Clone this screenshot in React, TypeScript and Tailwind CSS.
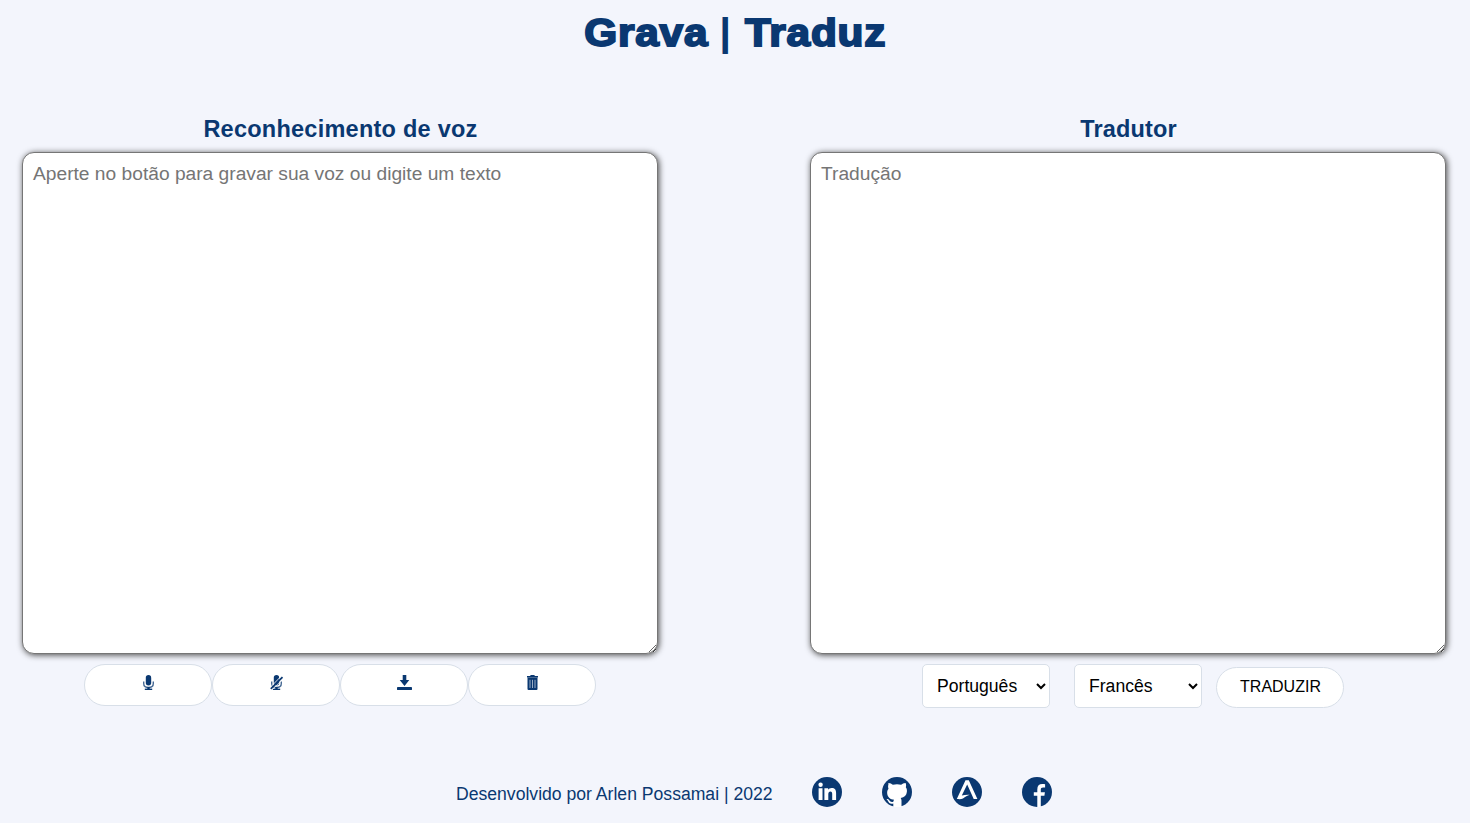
import type { ReactNode } from "react";

const NAVY = "#0a3871";

function Mic({ muted = false }: { muted?: boolean }) {
  return (
    <svg width="16" height="16" viewBox="-0.5 0 16 16" fill="none">
      <rect x="5.3" y="0" width="5.4" height="10.4" rx="2.7" fill={NAVY} />
      <path d="M3.2 6.6v1.8c0 2.6 2 4 4.8 4s4.8-1.4 4.800-4V6.600" stroke={NAVY} strokeOpacity="0.75" strokeWidth="1.4" />
      <path d="M8 12v3" stroke={NAVY} strokeWidth="2.4" />
      <path d="M4.300 14.300h7.400" stroke={NAVY} strokeWidth="1.400" />
      {muted && (
        <>
          <path d="M2 12.200 12.800 1" stroke="#fff" strokeWidth="0.900" />
          <path d="M2.300 13.900 14 2.200" stroke={NAVY} strokeWidth="1.700" />
          <path d="M3.500 14.900 14.600 3.800" stroke="#fff" strokeWidth="0.700" />
        </>
      )}
    </svg>
  );
}

function Download() {
  return (
    <svg width="16" height="16" viewBox="-0.5 0 16 16" fill={NAVY}>
      <path d="M6.200 0h3.600v5h3L8 11 3.200 5h3z" />
      <rect x="0.500" y="12" width="15" height="3" rx="0.400" />
    </svg>
  );
}

function Trash() {
  return (
    <svg width="16" height="16" viewBox="-0.5 0 16 16" fill={NAVY}>
      <path d="M2.500 1.100h3L6.300 0h3.400l.8 1.100h3v1.500h-11z" />
      <path d="M3 2.500h10v11.500a1 1 0 0 1-1 1H4a1 1 0 0 1-1-1z" />
      <path d="M5.500 4.800v8.200M8 4.800v8.200M10.500 4.800v8.200" stroke="#fff" strokeOpacity="0.65" strokeWidth="0.900" />
    </svg>
  );
}

function Social({ label, children }: { label: string; children: ReactNode }) {
  return (
    <a href="#" aria-label={label}>
      <svg width="30" height="30" viewBox="0 0 30 30">
        <circle cx="15" cy="15" r="15" fill={NAVY} />
        {children}
      </svg>
    </a>
  );
}

function Pill({ label, children }: { label: string; children: ReactNode }) {
  return (
    <button
      aria-label={label}
      className="flex h-[42px] w-32 items-start justify-center rounded-[24px] border border-[#d8dfe8] bg-white pt-[10px]"
    >
      {children}
    </button>
  );
}

const areaClass =
  "block h-[502px] w-[636px] resize rounded-xl border border-[#767676] bg-white px-[10px] pt-[10px] text-[19.2px] leading-[22px] shadow-[1px_1px_6px_#444] placeholder:text-[#757575]";
const selectClass =
  "h-11 w-32 rounded-[5px] border border-[#d8dfe8] bg-white pl-[10px] text-[17.6px] text-black";

export default function App() {
  return (
    <div className="flex h-[823px] w-[1470px] flex-col overflow-hidden bg-[#f3f5fc] font-['Liberation_Sans',Arial,sans-serif] text-[#0a3871]">
      <header className="flex h-[115px] justify-center pt-[10px]">
        <h1 className="flex h-[46px] scale-x-[1.1] justify-center text-[38.5px] leading-[46px] font-bold tracking-[0.7px] whitespace-pre">
          <span className="[-webkit-text-stroke:1.9px_#0a3871]">Grava</span>
          <span className="mr-[12px] ml-[10px] -translate-y-px font-bold">|</span>
          <span className="[-webkit-text-stroke:1.9px_#0a3871]">Traduz</span>
        </h1>
      </header>
      <main className="flex h-[662px] justify-between pr-6 pl-[22px]">
        <section className="flex w-[636px] flex-col">
          <h2 className="h-[37px] pl-px text-center text-[23.5px] leading-7 font-bold tracking-[0.25px]">Reconhecimento de voz</h2>
          <textarea className={areaClass} placeholder="Aperte no botão para gravar sua voz ou digite um texto" />
          <div className="mt-[10px] flex justify-center">
            <Pill label="Gravar"><Mic /></Pill>
            <Pill label="Parar"><Mic muted /></Pill>
            <Pill label="Baixar"><Download /></Pill>
            <Pill label="Limpar"><Trash /></Pill>
          </div>
        </section>
        <section className="flex w-[636px] flex-col">
          <h2 className="h-[37px] pl-px text-center text-[23.5px] leading-7 font-bold tracking-[0.15px]">Tradutor</h2>
          <textarea className={areaClass} placeholder="Tradução" />
          <div className="mt-[10px] flex items-end pl-28">
            <select className={selectClass}>
              <option>Português</option>
            </select>
            <select className={`${selectClass} ml-6`}>
              <option>Francês</option>
            </select>
            <button className="ml-[14px] h-[41px] w-32 rounded-[24px] border border-[#d8dfe8] bg-white pb-[2px] pl-px text-base text-black">
              TRADUZIR
            </button>
          </div>
        </section>
      </main>
      <footer className="flex h-[46px] pl-[456px]">
        <p className="mr-10 w-[316px] pt-[7px] text-[17.6px] leading-5 whitespace-nowrap">
          Desenvolvido por Arlen Possamai | 2022
        </p>
        <div className="flex gap-10">
          <Social label="LinkedIn">
            <path fill="#fff" d="M6.600 11.200h3.900V23H6.600zM12.400 11.200h3.700v1.500c.7-1.100 2-1.800 3.500-1.800 3.300 0 4.500 1.900 4.500 5.200V23h-3.900v-6c0-1.600-.4-2.600-1.800-2.600-1.400 0-2.100 1.100-2.100 2.800V23h-3.900z" />
            <circle cx="8.600" cy="7.800" r="2.200" fill="#fff" />
          </Social>
          <Social label="GitHub">
            <path fill="#fff" d="M6.400 6c1.700-.1 3.300.9 4.500 1.800a17 17 0 0 1 8.200 0c1.200-.9 2.800-1.900 4.500-1.800.7 1.600.6 3 .2 4.200 1 1.200 1.300 2.700 1.100 4.600-.4 3.800-2.500 5.600-6.200 6.100.5.700.8 1.600.8 2.700V30h-8.200v-3.500c-3.400.7-4.400-.7-5-2.100-.4-.9-1-1.500-1.700-2 .7-.6 1.900-.2 2.700.9 1 1.400 2 1.900 4 1.400.1-.8.3-1.400.8-2-3.700-.5-6.500-2.300-6.900-6.300-.2-1.900.3-3.400 1.300-4.600-.5-1.200-.6-2.600-.1-4.200z" />
          </Social>
          <Social label="Alura">
            <path fill="#fff" d="M13.500 3.300h3.300L25.400 22h-3.700L15.200 7.600 9.800 18.400c2.200-.5 4.700-.9 7.900-.7-2.500.9-4.300 2-6.700 3.700-1.600.9-3.600.8-6.200.6z" />
          </Social>
          <Social label="Facebook">
            <path fill="#fff" d="M15.300 30V18.800h-3.500v-3.600h3.500v-2.700c0-3.600 1.800-5.400 5-5.400 1.100 0 2 .1 2.800.2v3.300h-2c-1.700 0-2.300.8-2.300 2.200v2.400h4.100l-.5 3.600h-3.600V30z" />
          </Social>
        </div>
      </footer>
    </div>
  );
}
